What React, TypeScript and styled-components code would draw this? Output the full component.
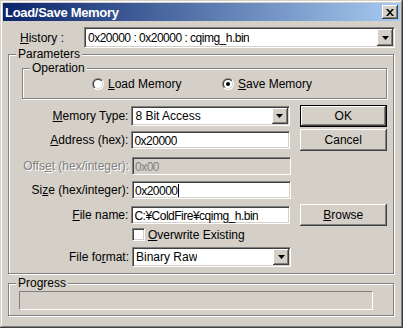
import React, { useId } from "react";
import styled, { createGlobalStyle } from "styled-components";

const GlobalStyle = createGlobalStyle`
  html, body {
    margin: 0;
    padding: 0;
    background: #d4d0c8;
  }
  body {
    font-family: "Liberation Sans", Arial, sans-serif;
    font-size: 12px;
    color: #000;
  }
  * {
    box-sizing: border-box;
  }
`;

const Radio = ({ checked }: { checked?: boolean }) => {
  const id = useId().replace(/:/g, "");
  return (
    <svg width="12" height="12" viewBox="0 0 12 12">
      <defs>
        <linearGradient id={`o${id}`} x1="0" y1="0" x2="1" y2="1">
          <stop offset="0.5" stopColor="#808080" />
          <stop offset="0.5" stopColor="#ffffff" />
        </linearGradient>
        <linearGradient id={`i${id}`} x1="0" y1="0" x2="1" y2="1">
          <stop offset="0.5" stopColor="#404040" />
          <stop offset="0.5" stopColor="#d4d0c8" />
        </linearGradient>
      </defs>
      <circle cx="6" cy="6" r="6" fill={`url(#o${id})`} />
      <circle cx="6" cy="6" r="5" fill={`url(#i${id})`} />
      <circle cx="6" cy="6" r="4" fill="#ffffff" />
      {checked ? <circle cx="6" cy="6" r="2" fill="#000000" /> : null}
    </svg>
  );
};

const Combo = ({
  value,
  width,
  height,
  tight,
}: {
  value: string;
  width: number;
  height: number;
  tight?: boolean;
}) => (
  <ComboBox style={{ width, height }}>
    <FieldText $tight={tight}>{value}</FieldText>
    <DropButton>
      <svg width="7" height="4" viewBox="0 0 7 4">
        <path d="M0 0h7L3.5 4z" fill="#000" />
      </svg>
    </DropButton>
  </ComboBox>
);

const App = () => {
  return (
    <>
      <GlobalStyle />
      <Window>
        <TitleBar>
          <Title>Load/Save Memory</Title>
          <CloseButton>
            <svg width="8" height="7" viewBox="0 0 8 7">
              <path
                d="M0 0h2l2 2.3L6 0h2L5 3.5 8 7H6L4 4.7 2 7H0l3-3.5z"
                fill="#000"
              />
            </svg>
          </CloseButton>
        </TitleBar>
        <Content>
          <HistoryRow>
            <HistoryLabel>
              <u>H</u>istory :
            </HistoryLabel>
            <Combo value="0x20000 : 0x20000 : cqimg_h.bin" width={311} height={21} tight />
          </HistoryRow>

          <Group $mt={6} $pad="13px 6px 6px 13px">
            <Caption>Parameters</Caption>
            <Operation>
              <Caption>Operation</Caption>
              <RadioOption $width={130}>
                <Radio />
                <span>
                  <u>L</u>oad Memory
                </span>
              </RadioOption>
              <RadioOption>
                <Radio checked />
                <span>
                  <u>S</u>ave Memory
                </span>
              </RadioOption>
            </Operation>

            <Rows>
              <Row $h={22} $mt={0}>
                <Label>
                  <u>M</u>emory Type:
                </Label>
                <Combo value="8 Bit Access" width={159} height={20} />
                <Button $default>OK</Button>
              </Row>
              <Row $h={22} $mt={2}>
                <Label>
                  <u>A</u>ddress (hex):
                </Label>
                <Edit>
                  <FieldText $tight>0x20000</FieldText>
                </Edit>
                <Button>Cancel</Button>
              </Row>
              <Row $h={18} $mt={6}>
                <Label $disabled>
                  Offs<u>e</u>t (hex/integer):
                </Label>
                <Edit $disabled>
                  <FieldText $tight>0x00</FieldText>
                </Edit>
              </Row>
              <Row $h={18} $mt={6}>
                <Label>
                  Si<u>z</u>e (hex/integer):
                </Label>
                <Edit>
                  <FieldText $tight>0x20000</FieldText>
                  <Caret />
                </Edit>
              </Row>
              <Row $h={22} $mt={5}>
                <Label>
                  <u>F</u>ile name:
                </Label>
                <Edit>
                  <FieldText $tight>C:¥ColdFire¥cqimg_h.bin</FieldText>
                </Edit>
                <Button>
                  <u>B</u>rowse
                </Button>
              </Row>
              <Row $h={13} $mt={2}>
                <Label />
                <CheckOption>
                  <CheckBox />
                  <span>
                    <u>O</u>verwrite Existing
                  </span>
                </CheckOption>
              </Row>
              <Row $h={20} $mt={6}>
                <Label>
                  File fo<u>r</u>mat:
                </Label>
                <Combo value="Binary Raw" width={159} height={20} />
              </Row>
            </Rows>
          </Group>

          <Group $mt={9} $pad="7px 0 5px 10px">
            <Caption>Progress</Caption>
            <ProgressBar />
          </Group>
        </Content>
      </Window>
    </>
  );
};

export default App;

const Window = styled.div`
  width: 403px;
  height: 328px;
  padding: 3px;
  background: #d4d0c8;
  box-shadow: inset -1px -1px #404040, inset 1px 1px #d4d0c8,
    inset -2px -2px #808080, inset 2px 2px #ffffff;
  display: flex;
  flex-direction: column;
`;

const TitleBar = styled.div`
  height: 18px;
  display: flex;
  align-items: center;
  justify-content: space-between;
  background: linear-gradient(to right, #0a246a, #a6caf0);
  padding: 0 2px;
`;

const Title = styled.div`
  color: #ffffff;
  font-weight: bold;
  font-size: 13px;
  letter-spacing: -0.3px;
  white-space: nowrap;
`;

const bevel = `
  background: #d4d0c8;
  box-shadow: inset -1px -1px #404040, inset 1px 1px #ffffff,
    inset -2px -2px #808080, inset 2px 2px #d4d0c8;
`;

const CloseButton = styled.div`
  width: 16px;
  height: 14px;
  display: flex;
  align-items: center;
  justify-content: center;
  ${bevel}
`;

const Content = styled.div`
  padding: 0 5px;
  display: flex;
  flex-direction: column;
`;

const HistoryRow = styled.div`
  margin-top: 6px;
  height: 21px;
  display: flex;
  align-items: center;
`;

const HistoryLabel = styled.div`
  width: 76px;
  padding-left: 12px;
  white-space: nowrap;
`;

const sunken = `
  border: 1px solid;
  border-color: #808080 #ffffff #ffffff #808080;
  box-shadow: inset 1px 1px #404040, inset -1px -1px #d4d0c8;
`;

const ComboBox = styled.div`
  ${sunken}
  background: #ffffff;
  padding: 1px;
  display: flex;
  align-items: center;
`;

const FieldText = styled.span<{ $tight?: boolean }>`
  flex: 0 1 auto;
  padding-left: 2px;
  white-space: nowrap;
  overflow: hidden;
  letter-spacing: ${(p) => (p.$tight ? "-0.5px" : "0")};
`;

const DropButton = styled.div`
  margin-left: auto;
  width: 16px;
  height: 100%;
  display: flex;
  align-items: center;
  justify-content: center;
  ${bevel}
`;

const Group = styled.div<{ $mt: number; $pad: string }>`
  position: relative;
  width: 386px;
  margin-top: ${(p) => p.$mt}px;
  padding: ${(p) => p.$pad};
  border: 1px solid #808080;
  box-shadow: 1px 1px #ffffff, inset 1px 1px #ffffff;
`;

const Caption = styled.span`
  position: absolute;
  top: -8px;
  left: 7px;
  padding: 0 2px;
  line-height: 14px;
  background: #d4d0c8;
  white-space: nowrap;
`;

const Operation = styled.div`
  position: relative;
  width: 365px;
  height: 31px;
  padding-left: 69px;
  border: 1px solid #808080;
  box-shadow: 1px 1px #ffffff, inset 1px 1px #ffffff;
  display: flex;
  align-items: center;
`;

const RadioOption = styled.div<{ $width?: number }>`
  display: flex;
  align-items: center;
  gap: 4px;
  width: ${(p) => (p.$width ? `${p.$width}px` : "auto")};
  white-space: nowrap;
`;

const Rows = styled.div`
  margin-top: 6px;
  display: flex;
  flex-direction: column;
`;

const Row = styled.div<{ $h: number; $mt: number }>`
  height: ${(p) => p.$h}px;
  margin-top: ${(p) => p.$mt}px;
  display: flex;
  align-items: center;
`;

const Label = styled.div<{ $disabled?: boolean }>`
  width: 107px;
  margin-right: 3px;
  text-align: right;
  white-space: nowrap;
  color: ${(p) => (p.$disabled ? "#808080" : "#000000")};
  text-shadow: ${(p) => (p.$disabled ? "1px 1px #ffffff" : "none")};
`;

const Edit = styled.div<{ $disabled?: boolean }>`
  ${sunken}
  width: 159px;
  height: 18px;
  padding: 1px 0 0 0;
  display: flex;
  align-items: center;
  background: ${(p) => (p.$disabled ? "#d4d0c8" : "#ffffff")};
  color: ${(p) => (p.$disabled ? "#808080" : "#000000")};
`;

const Caret = styled.span`
  width: 1px;
  height: 13px;
  background: #000000;
`;

const Button = styled.div<{ $default?: boolean }>`
  margin-left: 10px;
  width: 88px;
  height: 22px;
  display: flex;
  align-items: center;
  justify-content: center;
  ${bevel}
  border: ${(p) => (p.$default ? "1px solid #000000" : "none")};
`;

const CheckOption = styled.div`
  display: flex;
  align-items: center;
  gap: 3px;
  white-space: nowrap;
`;

const CheckBox = styled.div`
  ${sunken}
  width: 13px;
  height: 13px;
  background: #ffffff;
`;

const ProgressBar = styled.div`
  width: 354px;
  height: 19px;
  border: 1px solid;
  border-color: #808080 #ffffff #ffffff #808080;
`;
